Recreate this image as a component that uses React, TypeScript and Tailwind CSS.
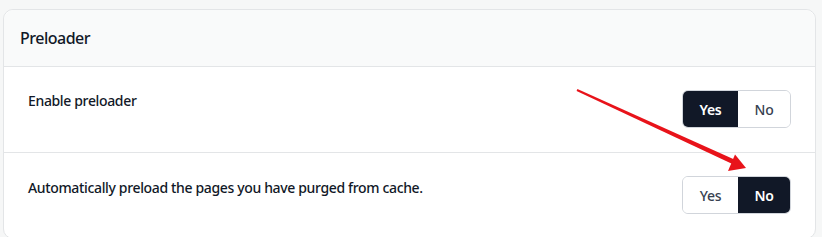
import React, { useState } from 'react';

type Choice = 'yes' | 'no';

interface ToggleProps {
  value: Choice;
  onChange: (v: Choice) => void;
}

function YesNo({ value, onChange }: ToggleProps) {
  const on = 'bg-[#111827] text-white font-semibold';
  const off = 'bg-white text-[#374151] font-medium';
  return (
    <div className="flex h-[38px] rounded-[6px] border border-[#d1d5db] overflow-hidden text-[14px] tracking-[-0.3px]">
      <button
        onClick={() => onChange('yes')}
        className={`w-[55px] ${value === 'yes' ? on : off}`}
      >
        Yes
      </button>
      <button
        onClick={() => onChange('no')}
        className={`w-[52px] ${value === 'no' ? on : off}`}
      >
        No
      </button>
    </div>
  );
}

export default function App() {
  const [enable, setEnable] = useState<Choice>('yes');
  const [auto, setAuto] = useState<Choice>('no');

  return (
    <div
      className="relative h-[237px] w-[822px] overflow-hidden bg-[#f6f7f7] pt-[9px] pl-[3px] pr-[6px] text-[#111827]"
      style={{ fontFamily: '"Noto Sans", "Open Sans", Arial, sans-serif' }}
    >
      <div className="rounded-[10px] border border-[#e3e5e7] bg-white">
        <div className="flex h-[57px] items-center rounded-t-[10px] border-b border-[#e3e5e7] bg-[#f9fafa] px-4">
          <h2 className="text-[16px] font-medium tracking-[-0.5px]">Preloader</h2>
        </div>

        <div className="flex items-start justify-between border-b border-[#e3e5e7] pl-6 pr-6 pt-[23px] pb-[24px]">
          <p className="text-[14px] font-medium leading-5 pt-[1px] tracking-[-0.35px]">Enable preloader</p>
          <YesNo value={enable} onChange={setEnable} />
        </div>

        <div className="flex items-start justify-between pl-6 pr-6 pt-[23px] pb-[24px]">
          <p className="text-[14px] font-medium leading-5 pt-[2px] tracking-[-0.35px]">
            Automatically preload the pages you have purged from cache.
          </p>
          <YesNo value={auto} onChange={setAuto} />
        </div>
      </div>

      {/* annotation arrow */}
      <svg className="absolute left-0 top-0 pointer-events-none" width="822" height="237">
        <polygon points="576.6,90.9 577.4,89.1 736,160.2 734,164.8" fill="#e8131a" />
        <polygon points="746,168 735,154.5 728,171" fill="#e8131a" />
      </svg>
    </div>
  );
}
